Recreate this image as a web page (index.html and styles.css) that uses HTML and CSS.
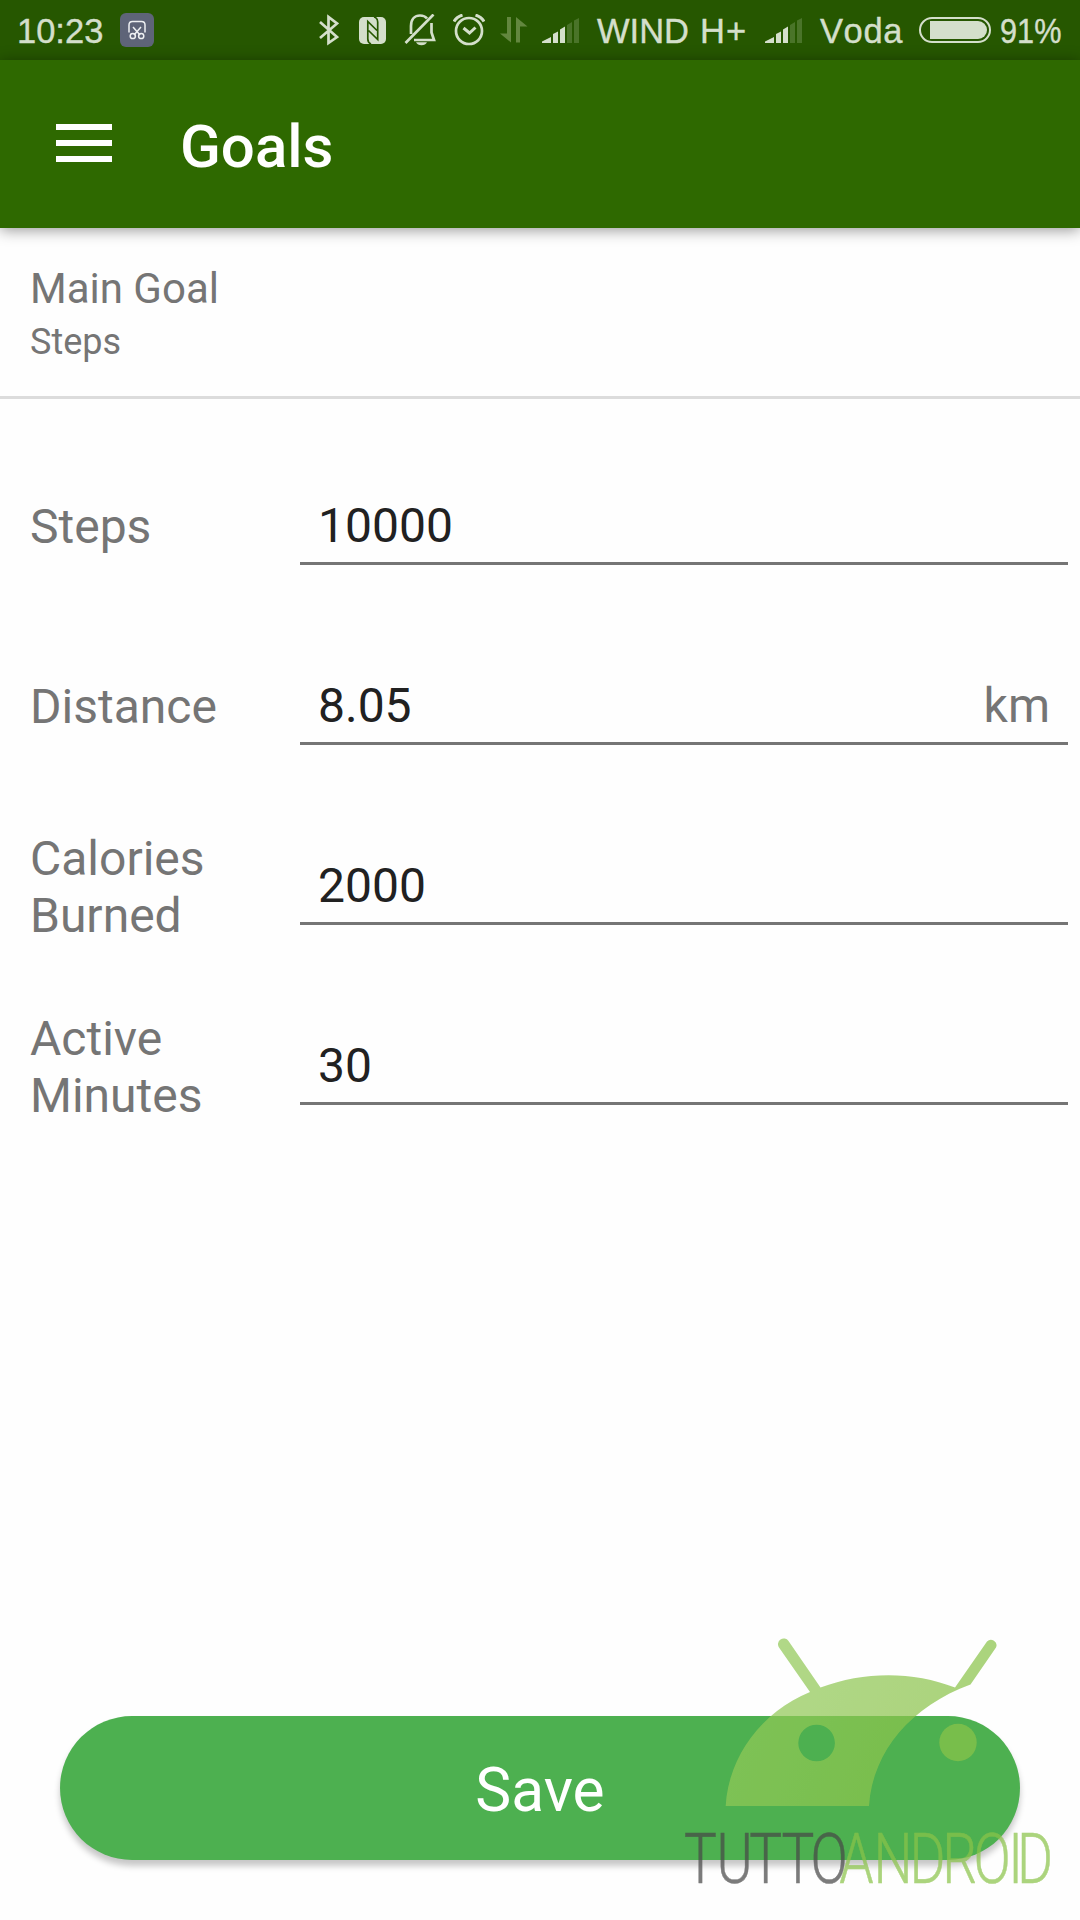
FILE: index.html
```html
<!DOCTYPE html>
<html lang="en">
<head>
<meta charset="utf-8">
<title>Goals</title>
<link rel="stylesheet" href="styles.css">
</head>
<body>
<div class="screen">
  <div class="status">
    <span class="clock">10:23</span>
    <svg class="shot" width="34" height="34" viewBox="120 13 34 34">
      <rect x="120" y="13" width="34" height="34" rx="6" fill="#5e6478"/>
      <g fill="none" stroke="#eef0f2" stroke-width="1.5">
        <path d="M129 32.500V25q0-3.500 3.500-3.500h9q3.500 0 3.500 3.500v7.500M133 27l7 8M141 27l-7 8"/>
        <circle cx="132.800" cy="36" r="2.600"/><circle cx="141.200" cy="36" r="2.600"/>
      </g>
    </svg>
    <span class="spacer"></span>
    <svg class="bt" width="20" height="32" viewBox="319 14 20 32">
      <path d="M320 22L337 37 328.500 43V17L337 23.500 320 38" fill="none" stroke="#d4dfcb" stroke-width="2.700"/>
    </svg>
    <svg class="nfc" width="28" height="28" viewBox="359 17 28 28">
      <rect x="359" y="17" width="27" height="27" rx="5" fill="#d4dfcb"/>
      <path d="M371 44q-3.200-1.500-3.200-5V21.500l9.200 9M374 17q3.700 1 3.700 5V39.500l-9.200-9" fill="none" stroke="#265700" stroke-width="1.700"/>
    </svg>
    <svg class="bell" width="32" height="32" viewBox="404 14 32 32">
      <g fill="none" stroke="#d4dfcb" stroke-width="2.700">
        <path d="M405.500 43L433.500 14.500M411 34V26c0-7 4-10.500 9-10.500 3 0 5.500 1 7 3M431.500 23v9.500l2.500 7.500H414"/>
      </g>
      <path d="M416 42.300h11q-1.500 3-5.500 3t-5.500-3z" fill="#d4dfcb"/>
    </svg>
    <svg class="alarm" width="32" height="32" viewBox="453 14 32 32">
      <g fill="none" stroke="#d4dfcb" stroke-width="2.700">
        <circle cx="469" cy="31" r="13"/>
        <path d="M463.500 28l6 5 6-5.500M454 21.500q2.500-4.500 8.500-6.500M484 21.500q-2.500-4.500-8.500-6.500" stroke-width="3"/>
      </g>
    </svg>
    <svg class="data" width="28" height="26" viewBox="500 17 28 26">
      <path d="M507 17h4v25.500L500 33.500h7zM516 42.500h4V26.500h7.500L516 17z" fill="#63873f"/>
    </svg>
    <svg class="signal" width="37" height="26" viewBox="542 18 37 26">
      <path d="M542 43v-1.500l9-4.500v6zM553 43v-9l5-2.500v11.500zM560 43V29.500l5-3v16.500z" fill="#d4dfcb"/>
      <path d="M567 43V25l5-3v21zM574 43V20.500l5-2.500v25z" fill="#4a7429"/>
    </svg>
    <span class="wind">WIND</span>
    <span class="hplus">H+</span>
    <svg class="signal" width="37" height="26" viewBox="542 18 37 26">
      <path d="M542 43v-1.500l9-4.500v6zM553 43v-9l5-2.500v11.500zM560 43V29.500l5-3v16.500z" fill="#d4dfcb"/>
      <path d="M567 43V25l5-3v21zM574 43V20.500l5-2.500v25z" fill="#4a7429"/>
    </svg>
    <span class="voda">Voda</span>
    <svg class="battery" width="72" height="26" viewBox="0 0 72 26">
      <rect x="1" y="1" width="70" height="24" rx="12" fill="none" stroke="#d4dfcb" stroke-width="2"/>
      <path d="M11 4h48a9 9 0 0 1 0 18H11z" fill="#d4dfcb"/>
    </svg>
    <span class="percent">91%</span>
  </div>

  <header class="appbar">
    <svg width="56" height="38" viewBox="0 0 56 38"><path d="M0 0h56v6H0zM0 16h56v6H0zM0 32h56v6H0z" fill="#fff"/></svg>
    <h1 class="title">Goals</h1>
  </header>

  <section class="main-goal">
    <div class="goal-title">Main Goal</div>
    <div class="goal-value">Steps</div>
  </section>

  <form class="goals">
    <div class="row"><label class="label">Steps</label><div class="field"><span>10000</span></div></div>
    <div class="row"><label class="label">Distance</label><div class="field"><span>8.05</span><span class="unit">km</span></div></div>
    <div class="row"><label class="label label-tall">Calories Burned</label><div class="field"><span>2000</span></div></div>
    <div class="row"><label class="label label-tall">Active Minutes</label><div class="field"><span>30</span></div></div>
  </form>

  <div class="save">Save</div>

  <svg class="watermark" width="420" height="300" viewBox="660 1620 420 300">
    <defs>
      <linearGradient id="leaf" gradientUnits="userSpaceOnUse" x1="730" y1="1700" x2="930" y2="1780">
        <stop offset="0" stop-color="#94ca5a"/><stop offset=".5" stop-color="#8fc653"/><stop offset="1" stop-color="#8bc34a"/>
      </linearGradient>
    </defs>
    <g opacity=".72">
      <path fill="url(#leaf)" fill-rule="evenodd" d="M725.700 1806C729 1755 762 1712 810 1692L779 1647.500A5.500 5.500 0 0 1 788.500 1641L820.500 1687.500C864 1671 913 1671 955 1687.500L987 1641.500A5.500 5.500 0 0 1 996 1647.500L970.500 1684.500C912 1706 873 1750 869 1806zM798.300 1743a18.300 18.300 0 1 0 36.600 0a18.300 18.300 0 1 0-36.600 0z"/>
      <circle cx="958" cy="1742.500" r="18.700" fill="#8bc34a"/>
      <g class="brand">
        <text class="brand-dark" transform="translate(0 1882.500) scale(.78 1)" x="877 918.500 960.500 1002 1039">TUTTO</text>
        <text class="brand-green" transform="translate(0 1882.500) scale(.78 1)" x="1076 1120 1166 1208 1248 1292.500 1304">ANDROID</text>
      </g>
    </g>
  </svg>
</div>
</body>
</html>
```
FILE: styles.css
```css
* { box-sizing: border-box; }
body { margin: 0; background: #fefefe; font-family: Roboto, sans-serif; }
.screen { position: relative; width: 1080px; height: 1920px; overflow: hidden; display: flex; flex-direction: column; background: #fefefe; }

.status { display: flex; align-items: flex-start; height: 60px; flex: none; background: #265700; color: #d4dfcb; font: 34.5px/62px "Liberation Sans", sans-serif; font-kerning: none; -webkit-text-stroke: .4px #d4dfcb; white-space: nowrap; }
.status svg { flex: none; }
.status span { flex: none; }
.status .spacer { flex: 1; }
.clock { width: 103px; padding-left: 17px; }
.shot { margin: 13px 0 0 17px; }
.bt { margin: 14px 20px 0 0; }
.nfc { margin: 17px 17px 0 0; }
.bell { margin: 14px 17px 0 0; }
.alarm { margin: 14px 15px 0 0; }
.data { margin: 17px 14px 0 0; }
.signal { margin-top: 18px; }
.wind { width: 103px; margin-left: 18px; }
.hplus { width: 65px; letter-spacing: 1px; }
.voda { width: 99px; margin-left: 18px; letter-spacing: .6px; }
.battery { margin-top: 17px; }
.percent { width: 80px; margin-left: 9px; transform: scaleX(.89); transform-origin: left; }

.appbar { position: relative; display: flex; align-items: center; gap: 68px; height: 168px; flex: none; padding: 0 56px 2px; background: #2e6900; box-shadow: 0 2px 14px rgba(0, 0, 0, .42); color: #fff; }
.title { margin: 0; padding-top: 8px; font-size: 60px; line-height: 70px; font-weight: 500; }

.main-goal { height: 171px; flex: none; padding: 36px 30px 0; border-bottom: 3px solid #dcdcdc; color: #757575; }
.goal-title { font-size: 42px; line-height: 50px; }
.goal-value { font-size: 36px; line-height: 42px; margin-top: 7px; }

.goals { display: flex; flex-direction: column; padding: 37px 12px 0 30px; }
.row { display: flex; align-items: center; height: 180px; color: #757575; font-size: 48px; line-height: 57px; }
.label { width: 270px; flex: none; padding-right: 60px; }
.label-tall { padding-top: 2px; }
.field { flex: 1; display: flex; justify-content: space-between; height: 78px; padding: 10px 18px 0; border-bottom: 3px solid #757575; }
.field span { color: #212121; }
.field .unit { color: #757575; }

.save { display: flex; align-items: center; justify-content: center; height: 144px; flex: none; margin: auto 60px 60px; padding-top: 4px; border-radius: 72px; background: #4db050; box-shadow: 0 6px 6px rgba(0, 0, 0, .22); color: #fff; font-size: 60.5px; }

.watermark { position: absolute; left: 660px; top: 1620px; }
.brand { font-family: Roboto, sans-serif; font-size: 70.5px; font-weight: 300; }
.brand-dark { fill: #484848; stroke: #484848; stroke-width: .5px; }
.brand-green { fill: #8bc34a; stroke: #8bc34a; stroke-width: .5px; }
```
